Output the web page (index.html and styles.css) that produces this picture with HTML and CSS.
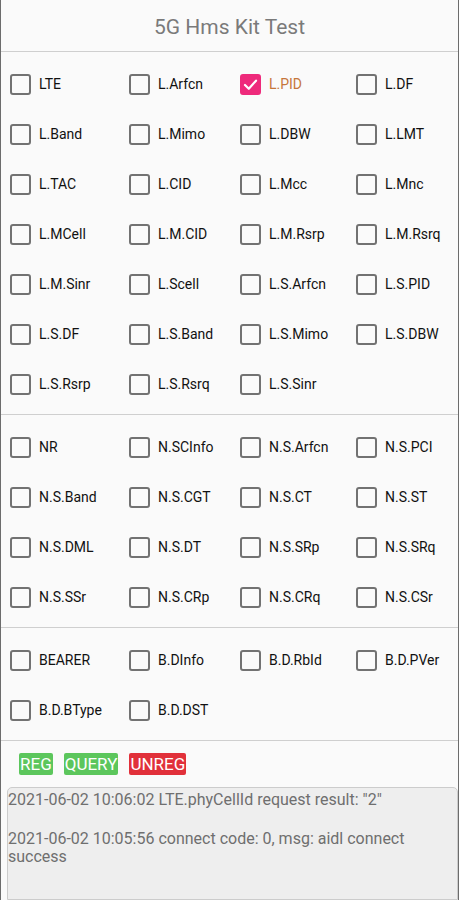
FILE: index.html
```html
<!DOCTYPE html>
<html>
<head>
<meta charset="utf-8">
<link rel="stylesheet" href="styles.css">
</head>
<body>
<div class="page">
  <header class="title">5G Hms Kit Test</header>

  <section class="grid">
    <label class="item"><span class="box"></span><span class="lbl">LTE</span></label>
    <label class="item"><span class="box"></span><span class="lbl">L.Arfcn</span></label>
    <label class="item checked"><span class="box"><svg viewBox="0 0 20 20" width="17" height="17"><path d="M3.5 10.5 L8 15 L16.5 5.5" fill="none" stroke="#fff" stroke-width="2.6" stroke-linecap="round" stroke-linejoin="round"/></svg></span><span class="lbl">L.PID</span></label>
    <label class="item"><span class="box"></span><span class="lbl">L.DF</span></label>

    <label class="item"><span class="box"></span><span class="lbl">L.Band</span></label>
    <label class="item"><span class="box"></span><span class="lbl">L.Mimo</span></label>
    <label class="item"><span class="box"></span><span class="lbl">L.DBW</span></label>
    <label class="item"><span class="box"></span><span class="lbl">L.LMT</span></label>

    <label class="item"><span class="box"></span><span class="lbl">L.TAC</span></label>
    <label class="item"><span class="box"></span><span class="lbl">L.CID</span></label>
    <label class="item"><span class="box"></span><span class="lbl">L.Mcc</span></label>
    <label class="item"><span class="box"></span><span class="lbl">L.Mnc</span></label>

    <label class="item"><span class="box"></span><span class="lbl">L.MCell</span></label>
    <label class="item"><span class="box"></span><span class="lbl">L.M.CID</span></label>
    <label class="item"><span class="box"></span><span class="lbl">L.M.Rsrp</span></label>
    <label class="item"><span class="box"></span><span class="lbl">L.M.Rsrq</span></label>

    <label class="item"><span class="box"></span><span class="lbl">L.M.Sinr</span></label>
    <label class="item"><span class="box"></span><span class="lbl">L.Scell</span></label>
    <label class="item"><span class="box"></span><span class="lbl">L.S.Arfcn</span></label>
    <label class="item"><span class="box"></span><span class="lbl">L.S.PID</span></label>

    <label class="item"><span class="box"></span><span class="lbl">L.S.DF</span></label>
    <label class="item"><span class="box"></span><span class="lbl">L.S.Band</span></label>
    <label class="item"><span class="box"></span><span class="lbl">L.S.Mimo</span></label>
    <label class="item"><span class="box"></span><span class="lbl">L.S.DBW</span></label>

    <label class="item"><span class="box"></span><span class="lbl">L.S.Rsrp</span></label>
    <label class="item"><span class="box"></span><span class="lbl">L.S.Rsrq</span></label>
    <label class="item"><span class="box"></span><span class="lbl">L.S.Sinr</span></label>
  </section>

  <section class="grid">
    <label class="item"><span class="box"></span><span class="lbl">NR</span></label>
    <label class="item"><span class="box"></span><span class="lbl">N.SCInfo</span></label>
    <label class="item"><span class="box"></span><span class="lbl">N.S.Arfcn</span></label>
    <label class="item"><span class="box"></span><span class="lbl">N.S.PCI</span></label>

    <label class="item"><span class="box"></span><span class="lbl">N.S.Band</span></label>
    <label class="item"><span class="box"></span><span class="lbl">N.S.CGT</span></label>
    <label class="item"><span class="box"></span><span class="lbl">N.S.CT</span></label>
    <label class="item"><span class="box"></span><span class="lbl">N.S.ST</span></label>

    <label class="item"><span class="box"></span><span class="lbl">N.S.DML</span></label>
    <label class="item"><span class="box"></span><span class="lbl">N.S.DT</span></label>
    <label class="item"><span class="box"></span><span class="lbl">N.S.SRp</span></label>
    <label class="item"><span class="box"></span><span class="lbl">N.S.SRq</span></label>

    <label class="item"><span class="box"></span><span class="lbl">N.S.SSr</span></label>
    <label class="item"><span class="box"></span><span class="lbl">N.S.CRp</span></label>
    <label class="item"><span class="box"></span><span class="lbl">N.S.CRq</span></label>
    <label class="item"><span class="box"></span><span class="lbl">N.S.CSr</span></label>
  </section>

  <section class="grid">
    <label class="item"><span class="box"></span><span class="lbl">BEARER</span></label>
    <label class="item"><span class="box"></span><span class="lbl">B.DInfo</span></label>
    <label class="item"><span class="box"></span><span class="lbl">B.D.RbId</span></label>
    <label class="item"><span class="box"></span><span class="lbl">B.D.PVer</span></label>

    <label class="item"><span class="box"></span><span class="lbl">B.D.BType</span></label>
    <label class="item"><span class="box"></span><span class="lbl">B.D.DST</span></label>
  </section>

  <div class="actions">
    <button class="btn green">REG</button>
    <button class="btn green">QUERY</button>
    <button class="btn red">UNREG</button>
  </div>

  <div class="log">
    <p>2021-06-02 10:06:02 LTE.phyCellId request result: "2"</p>
    <p>2021-06-02 10:05:56 connect code: 0, msg: aidl connect success</p>
  </div>
</div>
</body>
</html>
```

FILE: styles.css
```css
* { box-sizing: border-box; }
html, body { margin: 0; padding: 0; }
body {
  background: #fafafa;
  font-family: Roboto, "Noto Sans", sans-serif;
}
.page {
  width: 459px;
  height: 900px;
  border-left: 1px solid #6c6c6c;
  border-right: 1px solid #6c6c6c;
  overflow: hidden;
  display: flex;
  flex-direction: column;
}
.title {
  height: 52px;
  border-bottom: 1px solid #cfcfcf;
  display: flex;
  align-items: center;
  justify-content: center;
  padding-top: 2px;
  font-size: 21px;
  color: #7a7a7a;
}
.grid {
  display: grid;
  grid-template-columns: 119px 111px 116px 1fr;
  grid-auto-rows: 50px;
  padding: 7px 0 5px 9px;
  border-bottom: 1px solid #cfcfcf;
}
.item {
  display: flex;
  align-items: center;
  gap: 8px;
  font-size: 14px;
  color: #111;
}
.box {
  width: 21px;
  height: 21px;
  border: 2px solid #727272;
  border-radius: 3px;
  display: flex;
  align-items: center;
  justify-content: center;
  flex: none;
}
.checked .box {
  background: #ee2a7b;
  border-color: #ee2a7b;
}
.checked .lbl { color: #c6763b; }
.actions {
  display: flex;
  gap: 11px;
  padding: 12px 0 0 18px;
  height: 46px;
}
.btn {
  border: 0;
  margin: 0;
  height: 22px;
  padding: 0 1px;
  border-radius: 2px;
  color: #fff;
  font-family: Roboto, "Noto Sans", sans-serif;
  font-size: 17px;
  line-height: 22px;
}
.green { background: #5cc65c; }
.red { background: #e1303a; }
.log {
  flex: 1;
  margin: 0 0 0 6px;
  background: #eeeeee;
  border: 1px solid #cccccc;
  border-radius: 5px 5px 0 0;
  padding: 3px 0 0 0;
  color: #6f6f6f;
  font-size: 16px;
  line-height: 18px;
}
.log p { margin: 0 0 21px 0; }
```
